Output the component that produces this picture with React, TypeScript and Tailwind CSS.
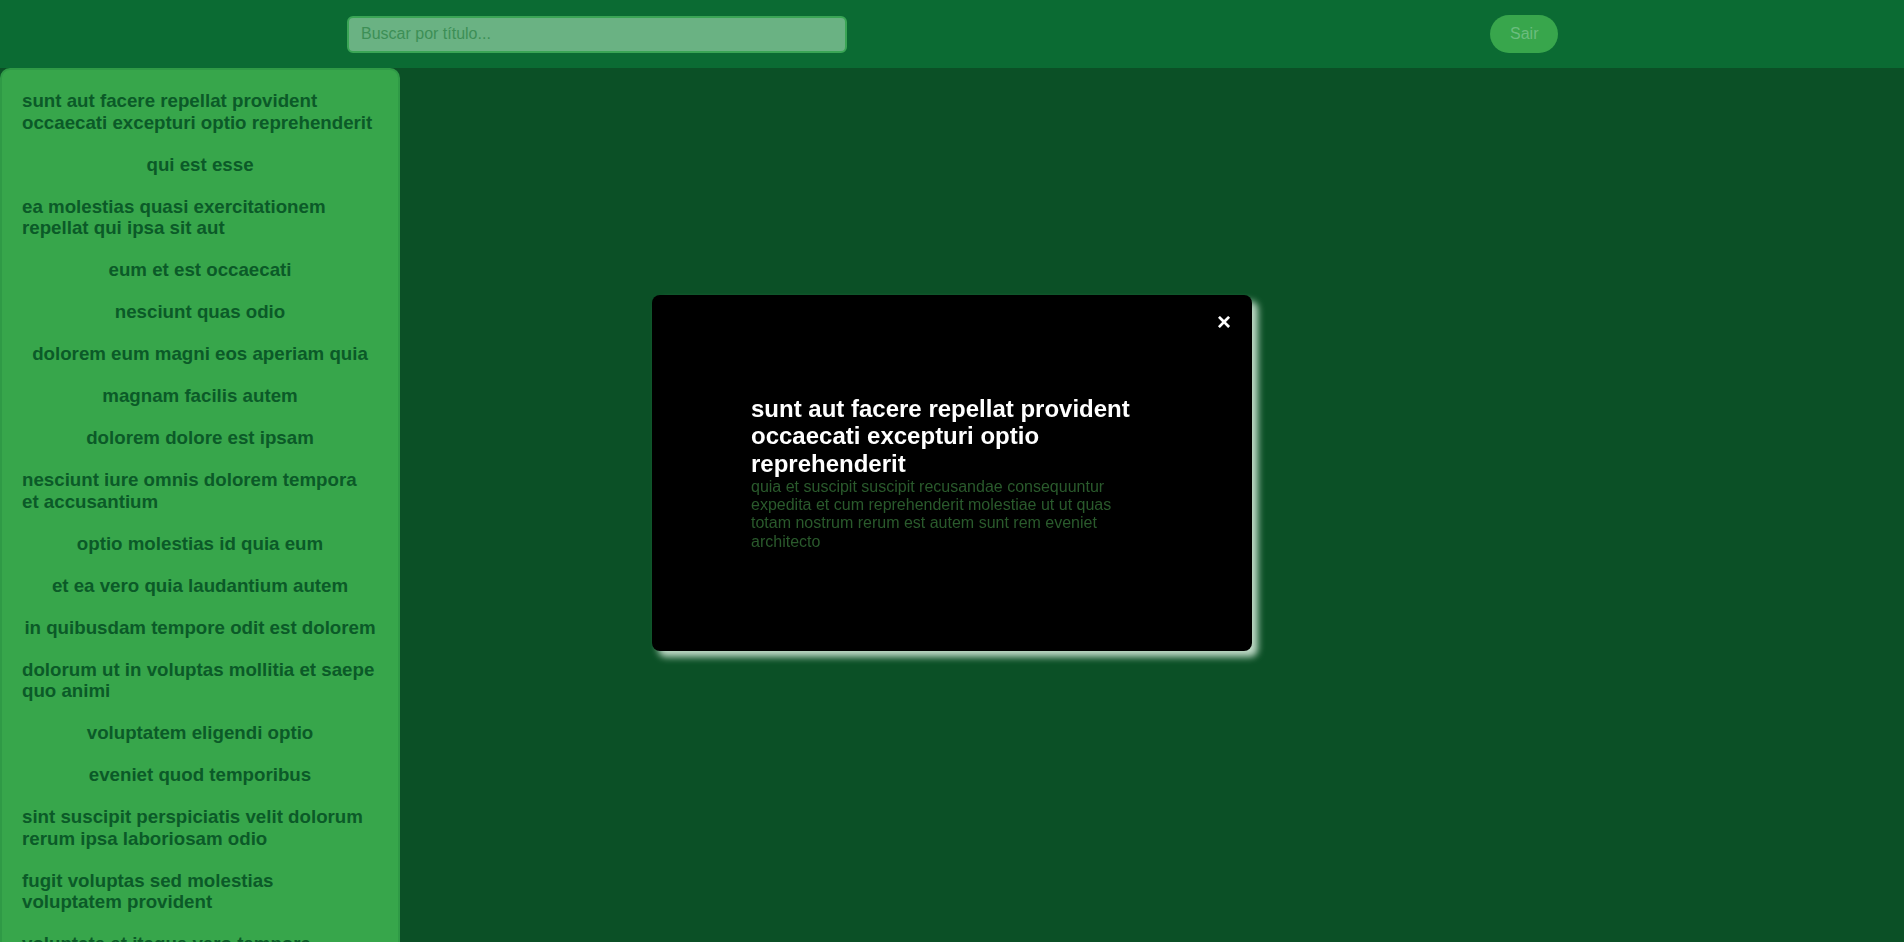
import { useState } from 'react';

interface Post {
    id: number;
    title: string;
    body: string;
}

// posts fixos (mesmos títulos da lista)
const posts: Post[] = [
    { id: 1, title: 'sunt aut facere repellat provident occaecati excepturi optio reprehenderit', body: 'quia et suscipit suscipit recusandae consequuntur expedita et cum reprehenderit molestiae ut ut quas totam nostrum rerum est autem sunt rem eveniet architecto' },
    { id: 2, title: 'qui est esse', body: 'est rerum tempore vitae sequi sint nihil reprehenderit dolor beatae ea dolores neque' },
    { id: 3, title: 'ea molestias quasi exercitationem repellat qui ipsa sit aut', body: 'et iusto sed quo iure voluptatem occaecati omnis eligendi aut ad' },
    { id: 4, title: 'eum et est occaecati', body: 'ullam et saepe reiciendis voluptatem adipisci sit amet autem assumenda' },
    { id: 5, title: 'nesciunt quas odio', body: 'repudiandae veniam quaerat sunt sed alias aut fugiat sit autem sed est' },
    { id: 6, title: 'dolorem eum magni eos aperiam quia', body: 'ut aspernatur corporis harum nihil quis provident sequi' },
    { id: 7, title: 'magnam facilis autem', body: 'dolore placeat quibusdam ea quo vitae magni quis enim qui quis quo nemo aut saepe' },
    { id: 8, title: 'dolorem dolore est ipsam', body: 'dignissimos aperiam dolorem qui eum facilis quibusdam animi sint suscipit' },
    { id: 9, title: 'nesciunt iure omnis dolorem tempora et accusantium', body: 'consectetur animi nesciunt iure dolore enim quia ad veniam autem ut quam aut nobis' },
    { id: 10, title: 'optio molestias id quia eum', body: 'quo et expedita modi cum officia vel magni doloribus qui repudiandae' },
    { id: 11, title: 'et ea vero quia laudantium autem', body: 'delectus reiciendis molestiae occaecati non minima eveniet qui voluptatibus' },
    { id: 12, title: 'in quibusdam tempore odit est dolorem', body: 'itaque id aut magnam praesentium quia et ea odit et ea voluptas et' },
    { id: 13, title: 'dolorum ut in voluptas mollitia et saepe quo animi', body: 'aut dicta possimus sint mollitia voluptas commodi quo doloremque' },
    { id: 14, title: 'voluptatem eligendi optio', body: 'fuga et accusamus dolorum perferendis illo voluptas non doloremque neque facere' },
    { id: 15, title: 'eveniet quod temporibus', body: 'reprehenderit quos placeat velit minima officia dolores impedit repudiandae molestiae nam' },
    { id: 16, title: 'sint suscipit perspiciatis velit dolorum rerum ipsa laboriosam odio', body: 'suscipit nam nisi quo aperiam aut asperiores eos fugit maiores voluptatibus quia' },
    { id: 17, title: 'fugit voluptas sed molestias voluptatem provident', body: 'eos voluptas et aut odit natus earum aspernatur fuga molestiae ullam' },
    { id: 18, title: 'voluptate et itaque vero tempora molestiae', body: 'eveniet quo quis laborum totam consequatur non dolor ut et est repudiandae' },
    { id: 19, title: 'adipisci placeat illum aut reiciendis qui', body: 'illum quis cupiditate provident sit magnam ea sed aut omnis' },
    { id: 20, title: 'doloribus ad provident suscipit at', body: 'qui consequuntur ducimus possimus quisquam amet similique suscipit porro ipsam amet' },
];

export default function App() {
    const [search, setSearch] = useState('');
    const [selected, setSelected] = useState<Post | null>(posts[0]);

    const filtered = posts.filter((p) => p.title.toLowerCase().includes(search.toLowerCase()));

    return (
        <div className="h-screen overflow-hidden bg-[#0b5026] font-['Liberation_Sans',Arial,sans-serif]">
            <header className="h-[68px] bg-[#0b6b33] flex items-center pl-[347px]">
                <input
                    type="text"
                    value={search}
                    onChange={(e) => setSearch(e.target.value)}
                    placeholder="Buscar por título..."
                    className="w-[500px] h-[37px] rounded-[6px] border-2 border-[#3aa555] bg-[#6ab283] px-3 text-[16px] text-[#1d6b36] placeholder:text-[#3d8f56] outline-none"
                />
                <button className="ml-[643px] h-[38px] px-5 rounded-full bg-[#38a64c] text-[16px] text-[#6bbd7e]">
                    Sair
                </button>
            </header>

            <aside className="w-[400px] min-h-[874px] rounded-t-[10px] border-2 border-[#2f9a46] bg-[#37a64b] px-5 pt-5">
                <ul className="flex flex-col items-center gap-[20.5px]">
                    {filtered.map((post) => (
                        <li
                            key={post.id}
                            onClick={() => setSelected(post)}
                            className="cursor-pointer text-left text-[18.72px] leading-[21.5px] font-bold text-[#0b5a28]"
                        >
                            {post.title}
                        </li>
                    ))}
                </ul>
            </aside>

            {selected && (
                <div className="fixed inset-0 flex items-center justify-center">
                    <div className="relative mt-[4px] w-[600px] h-[356px] rounded-[8px] bg-black shadow-[6px_6px_7px_rgba(220,240,225,0.85)] flex items-center justify-center">
                        <button
                            onClick={() => setSelected(null)}
                            className="absolute top-[15px] right-[21px] text-[24px] leading-[24px] font-bold text-white"
                        >
                            ×
                        </button>
                        <div className="w-[402px]">
                            <h2 className="text-[24px] leading-[27.6px] font-bold text-white">{selected.title}</h2>
                            <p className="text-[16px] leading-[18.4px] text-[#2a5a2c]">{selected.body}</p>
                        </div>
                    </div>
                </div>
            )}
        </div>
    );
}
